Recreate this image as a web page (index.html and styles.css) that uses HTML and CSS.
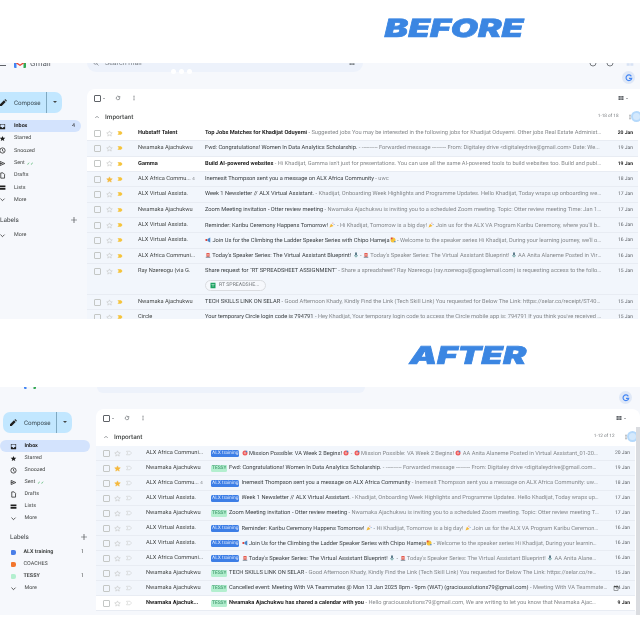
FILE: index.html
```html
<!DOCTYPE html>
<html lang="en">
<head>
    <meta charset="UTF-8">
    <title>Gmail inbox - before and after</title>
    <link rel="stylesheet" href="styles.css">
</head>
<body>
    <svg class="sprites" width="0" height="0">
        <symbol id="star" viewBox="0 0 24 24"><path d="M12 3l2.7 6.2 6.8.6-5.1 4.5 1.5 6.6L12 17.4l-5.9 3.5 1.5-6.6-5.1-4.5 6.8-.6z"/></symbol>
        <symbol id="imp" viewBox="0 0 24 24"><path d="M2 5h14l6 7-6 7H2l5-7z"/></symbol>
        <symbol id="logo" viewBox="0 0 24 18"><path fill="#4285f4" d="M0 4h5v14H2a2 2 0 0 1-2-2z"/><path fill="#34a853" d="M19 4h5v12a2 2 0 0 1-2 2h-3z"/><path fill="#ea4335" d="M0 3l12 8 12-8v3l-12 8L0 6z"/><path fill="#fbbc04" d="M19 2l3-1.5a1.5 1.5 0 0 1 2 1.5v3l-5 3.5z"/></symbol>
        <symbol id="pencil" viewBox="0 0 24 24"><path d="M3 21v-5L15 4l5 5L8 21zM16.5 2.500l5 5 1-1a2 2 0 0 0 0-3l-2-2a2 2 0 0 0-3 0z"/></symbol>
        <symbol id="inbox" viewBox="0 0 24 24"><path d="M3 3h18v18H3zM5 5v9h4a3 3 0 0 0 6 0h4V5z"/></symbol>
        <symbol id="clock" viewBox="0 0 24 24"><path fill="none" stroke="currentColor" stroke-width="2.5" d="M12 3a9 9 0 1 0 0 18 9 9 0 0 0 0-18zM12 7v6l4 2"/></symbol>
        <symbol id="send" viewBox="0 0 24 24"><path fill="none" stroke="currentColor" stroke-width="2.5" d="M4 5l16 7-16 7zM4 12h8"/></symbol>
        <symbol id="file" viewBox="0 0 24 24"><path fill="none" stroke="currentColor" stroke-width="2.5" d="M6 3h8l5 5v13H6z"/></symbol>
        <symbol id="lists" viewBox="0 0 24 24"><path d="M2 5h20v6H2zM2 14h20v6H2z"/></symbol>
        <symbol id="down" viewBox="0 0 24 24"><path fill="none" stroke="currentColor" stroke-width="2.5" d="M5 9l7 7 7-7"/></symbol>
        <symbol id="up" viewBox="0 0 24 24"><path fill="none" stroke="currentColor" stroke-width="2.5" d="M5 16l7-7 7 7"/></symbol>
        <symbol id="refresh" viewBox="0 0 24 24"><path fill="none" stroke="currentColor" stroke-width="2.5" d="M19 12a7 7 0 1 1-2-5l2 2M19 4v5h-5"/></symbol>
        <symbol id="dots" viewBox="0 0 24 24"><path d="M10 3h4v4h-4zM10 10h4v4h-4zM10 17h4v4h-4z"/></symbol>
        <symbol id="plus" viewBox="0 0 24 24"><path d="M11 3h2v8h8v2h-8v8h-2v-8H3v-2h8z"/></symbol>
        <symbol id="density" viewBox="0 0 24 24"><path d="M2 4h9v7H2zM13 4h9v7h-9zM2 13h9v7H2zM13 13h9v7h-9z"/></symbol>
        <symbol id="search" viewBox="0 0 24 24"><path fill="none" stroke="currentColor" stroke-width="3" d="M10 3a7 7 0 1 0 0 14 7 7 0 0 0 0-14zM15 15l7 7"/></symbol>
        <symbol id="ring" viewBox="0 0 24 24"><path fill="none" stroke="currentColor" stroke-width="2.5" d="M12 3a9 9 0 1 0 0 18 9 9 0 0 0 0-18z"/></symbol>
        <symbol id="gee" viewBox="0 0 24 24"><path fill="none" stroke="#4285f4" stroke-width="3.5" d="M19 7a8.500 8.500 0 1 0 1 6h-8"/></symbol>
        <symbol id="cal" viewBox="0 0 24 24"><path d="M3 4h3V2h2v2h8V2h2v2h3v18H3zM5 9v11h14V9z"/></symbol>
        <symbol id="sheet" viewBox="0 0 24 24"><path fill="#1ea362" d="M2 1h20v22H2z"/><path fill="#fff" d="M6 8h12v2h-5v7h-2v-7H6z"/></symbol>
        <symbol id="horn" viewBox="0 0 24 24"><path fill="#e0433a" d="M2 8h7v8H2z"/><path fill="#4a87c9" d="M10 8l11-6v20l-11-6z"/></symbol>
        <symbol id="siren" viewBox="0 0 24 24"><path fill="#e0433a" d="M6 4h12v15H6z"/><path fill="#f6b9a8" d="M9 7h6v8H9z"/><path fill="#7b8794" d="M3 19h18v4H3z"/></symbol>
        <symbol id="party" viewBox="0 0 24 24"><path fill="#f2b632" d="M2 22l6-15 10 9z"/><path fill="#e0433a" d="M14 3h3v3h-3z"/><path fill="#4a87c9" d="M19 8h3v3h-3z"/></symbol>
        <symbol id="mic" viewBox="0 0 24 24"><path fill="#5e7d8c" d="M8 2h8v12H8z"/><path fill="#3f8f86" d="M5 12h2a5 5 0 0 0 10 0h2a7 7 0 0 1-6 7v3h-2v-3a7 7 0 0 1-6-7z"/></symbol>
        <symbol id="face" viewBox="0 0 24 24"><circle cx="12" cy="12" r="10" fill="#f4c33c"/><path fill="#e0433a" d="M3 2h7v7H3z"/><path fill="#4a87c9" d="M17 16h5v5h-5z"/></symbol>
        <symbol id="target" viewBox="0 0 24 24"><circle cx="12" cy="12" r="10" fill="#ee5a5a"/><circle cx="12" cy="12" r="5" fill="#f59a9a"/><path fill="#4a87c9" d="M15 3h6v6h-6z"/></symbol>
    </svg>

    <div class="title"><h2 class="big big-before">BEFORE</h2></div>

    <section class="shot shot-before">
        <div class="topbar">
            <div class="brand"><span class="burger"></span><svg class="logo"><use href="#logo"/></svg><span class="brand-name">Gmail</span></div>
            <div class="search">
                <svg class="ic"><use href="#search"/></svg><span class="search-text">Search mail</span>
                <span class="loading"><i></i><i></i><i></i></span>
                <svg class="ic filter"><use href="#density"/></svg>
            </div>
            <div class="top-right">
                <div class="top-icons">
                    <svg class="ic-big"><use href="#ring"/></svg>
                    <svg class="ic-big"><use href="#ring"/></svg>
                    <svg class="ic-big faint"><use href="#density"/></svg>
                </div>
                <span class="gee"><svg><use href="#gee"/></svg></span>
            </div>
        </div>
        <div class="layout">
            <aside class="sidebar">
                <div class="compose"><svg class="ic-big"><use href="#pencil"/></svg><span class="compose-text">Compose</span><span class="compose-arrow"></span></div>
                <ul class="nav">
                    <li class="active"><svg class="ic-nav"><use href="#inbox"/></svg><b>Inbox</b><em>4</em></li>
                    <li><svg class="ic-nav"><use href="#star"/></svg>Starred</li>
                    <li><svg class="ic-nav"><use href="#clock"/></svg>Snoozed</li>
                    <li><svg class="ic-nav"><use href="#send"/></svg>Sent <span class="tick">✓✓</span></li>
                    <li><svg class="ic-nav"><use href="#file"/></svg>Drafts</li>
                    <li><svg class="ic-nav"><use href="#lists"/></svg>Lists</li>
                    <li><svg class="ic-nav"><use href="#down"/></svg>More</li>
                </ul>
                <div class="labels-head"><span>Labels</span><svg class="ic-big"><use href="#plus"/></svg></div>
                <ul class="nav">
                    <li><svg class="ic-nav"><use href="#down"/></svg>More</li>
                </ul>
            </aside>
            <main class="card">
                <div class="toolbar">
                    <span class="check check-top"></span><span class="caret"></span>
                    <svg class="ic tool"><use href="#refresh"/></svg>
                    <svg class="ic tool"><use href="#dots"/></svg>
                    <span class="density"><svg class="ic"><use href="#density"/></svg><span class="caret"></span></span>
                </div>
                <div class="section">
                    <svg class="ic"><use href="#up"/></svg><span class="section-name">Important</span>
                    <span class="pages">1-18 of 18</span>
                    <svg class="ic"><use href="#dots"/></svg>
                    <span class="pulse"></span>
                </div>

                <div class="row unread"><span class="check"></span><svg class="star"><use href="#star"/></svg><svg class="imp"><use href="#imp"/></svg><span class="sender">Hubstaff Talent</span><span class="text"><b>Top Jobs Matches for Khadijat Oduyemi</b> - Suggested jobs You may be interested in the following jobs for Khadijat Oduyemi. Other jobs Real Estate Administrati...</span><span class="date">20 Jan</span></div>
                <div class="row"><span class="check"></span><svg class="star"><use href="#star"/></svg><svg class="imp"><use href="#imp"/></svg><span class="sender">Nwamaka Ajachukwu</span><span class="text"><b>Fwd: Congratulations! Women In Data Analytics Scholarship.</b> - ---------- Forwarded message --------- From: Digitaley drive &lt;digitaleydrive@gmail.com&gt; Date: We...</span><span class="date">19 Jan</span></div>
                <div class="row unread"><span class="check"></span><svg class="star"><use href="#star"/></svg><svg class="imp"><use href="#imp"/></svg><span class="sender">Gamma</span><span class="text"><b>Build AI-powered websites</b> - Hi Khadijat, Gamma isn't just for presentations. You can use all the same AI-powered tools to build websites too. Build and publish y...</span><span class="date">19 Jan</span></div>
                <div class="row"><span class="check"></span><svg class="star on"><use href="#star"/></svg><svg class="imp"><use href="#imp"/></svg><span class="sender">ALX Africa Commu... <small>4</small></span><span class="text"><b>Inemesit Thompson sent you a message on ALX Africa Community</b> - uwc</span><span class="date">18 Jan</span></div>
                <div class="row"><span class="check"></span><svg class="star"><use href="#star"/></svg><svg class="imp"><use href="#imp"/></svg><span class="sender">ALX Virtual Assista.</span><span class="text"><b>Week 1 Newsletter // ALX Virtual Assistant.</b> - Khadijat, Onboarding Week Highlights and Programme Updates. Hello Khadijat, Today wraps up onboarding week, and ...</span><span class="date">17 Jan</span></div>
                <div class="row"><span class="check"></span><svg class="star"><use href="#star"/></svg><svg class="imp"><use href="#imp"/></svg><span class="sender">Nwamaka Ajachukwu</span><span class="text"><b>Zoom Meeting invitation - Otter review meeting</b> - Nwamaka Ajachukwu is inviting you to a scheduled Zoom meeting. Topic: Otter review meeting Time: Jan 17, 2025 ...</span><span class="date">17 Jan</span></div>
                <div class="row"><span class="check"></span><svg class="star"><use href="#star"/></svg><svg class="imp"><use href="#imp"/></svg><span class="sender">ALX Virtual Assista.</span><span class="text"><b>Reminder: Karibu Ceremony Happens Tomorrow! <svg class="emo"><use href="#party"/></svg></b> - Hi Khadijat, Tomorrow is a big day! <svg class="emo"><use href="#party"/></svg> Join us for the ALX VA Program Karibu Ceremony, where you'll be offici...</span><span class="date">16 Jan</span></div>
                <div class="row"><span class="check"></span><svg class="star"><use href="#star"/></svg><svg class="imp"><use href="#imp"/></svg><span class="sender">ALX Virtual Assista.</span><span class="text"><svg class="emo"><use href="#horn"/></svg> <b>Join Us for the Climbing the Ladder Speaker Series with Chipo Hameja<svg class="emo"><use href="#face"/></svg></b> - Welcome to the speaker series Hi Khadijat, During your learning journey, we'll occas...</span><span class="date">16 Jan</span></div>
                <div class="row"><span class="check"></span><svg class="star"><use href="#star"/></svg><svg class="imp"><use href="#imp"/></svg><span class="sender">ALX Africa Communi...</span><span class="text"><svg class="emo"><use href="#siren"/></svg> <b>Today's Speaker Series: The Virtual Assistant Blueprint! <svg class="emo"><use href="#mic"/></svg></b> - <svg class="emo"><use href="#siren"/></svg> Today's Speaker Series: The Virtual Assistant Blueprint! <svg class="emo"><use href="#mic"/></svg> AA Anita Alaneme Posted in Virtual A...</span><span class="date">16 Jan</span></div>
                <div class="row row-chip"><span class="check"></span><svg class="star"><use href="#star"/></svg><svg class="imp"><use href="#imp"/></svg><span class="sender">Ray Nzereogu (via G.</span><div class="text-wrap"><span class="text"><b>Share request for "RT SPREADSHEET ASSIGNMENT"</b> - Share a spreadsheet? Ray Nzereogu (ray.nzereogu@googlemail.com) is requesting access to the following sp...</span><span class="chip"><svg class="chip-icon"><use href="#sheet"/></svg>RT SPREADSHE...</span></div><span class="date">15 Jan</span></div>
                <div class="row"><span class="check"></span><svg class="star"><use href="#star"/></svg><svg class="imp"><use href="#imp"/></svg><span class="sender">Nwamaka Ajachukwu</span><span class="text"><b>TECH SKILLS LINK ON SELAR</b> - Good Afternoon Khady, Kindly Find the Link (Tech Skill Link) You requested for Below The Link: https://selar.co/receipt/ST401HZ1O7p...</span><span class="date">15 Jan</span></div>
                <div class="row"><span class="check"></span><svg class="star"><use href="#star"/></svg><svg class="imp"><use href="#imp"/></svg><span class="sender">Circle</span><span class="text"><b>Your temporary Circle login code is 794791</b> - Hey Khadijat, Your temporary login code to access the Circle mobile app is: 794791 If you think you've received this em...</span><span class="date">15 Jan</span></div>
            </main>
        </div>
    </section>

    <div class="title title-after"><h2 class="big big-after">AFTER</h2></div>

    <section class="shot shot-after">
        <div class="topbar">
            <div class="brand"><span class="burger"></span><svg class="logo"><use href="#logo"/></svg><span class="brand-name">Gmail</span></div>
            <div class="search"></div>
            <div class="top-right">
                <div class="top-icons">
                    <svg class="ic-big"><use href="#ring"/></svg>
                    <svg class="ic-big"><use href="#ring"/></svg>
                    <svg class="ic-big faint"><use href="#density"/></svg>
                </div>
                <span class="gee"><svg><use href="#gee"/></svg></span>
            </div>
        </div>
        <div class="layout">
            <aside class="sidebar">
                <div class="compose"><svg class="ic-big"><use href="#pencil"/></svg><span class="compose-text">Compose</span><span class="compose-arrow"></span></div>
                <ul class="nav">
                    <li class="active"><svg class="ic-nav"><use href="#inbox"/></svg><b>Inbox</b></li>
                    <li><svg class="ic-nav"><use href="#star"/></svg>Starred</li>
                    <li><svg class="ic-nav"><use href="#clock"/></svg>Snoozed</li>
                    <li><svg class="ic-nav"><use href="#send"/></svg>Sent <span class="tick">✓✓</span></li>
                    <li><svg class="ic-nav"><use href="#file"/></svg>Drafts</li>
                    <li><svg class="ic-nav"><use href="#lists"/></svg>Lists</li>
                    <li><svg class="ic-nav"><use href="#down"/></svg>More</li>
                </ul>
                <div class="labels-head"><span>Labels</span><svg class="ic-big"><use href="#plus"/></svg></div>
                <ul class="nav">
                    <li><span class="swatch swatch-blue"></span><b>ALX training</b><em>1</em></li>
                    <li><span class="swatch swatch-orange"></span>COACHES</li>
                    <li><span class="swatch swatch-green"></span><b>TESSY</b><em>1</em></li>
                    <li><svg class="ic-nav"><use href="#down"/></svg>More</li>
                </ul>
            </aside>
            <main class="card">
                <div class="toolbar">
                    <span class="check check-top"></span><span class="caret"></span>
                    <svg class="ic tool"><use href="#refresh"/></svg>
                    <svg class="ic tool"><use href="#dots"/></svg>
                    <span class="density"><svg class="ic"><use href="#density"/></svg><span class="caret"></span></span>
                </div>
                <div class="section">
                    <svg class="ic"><use href="#up"/></svg><span class="section-name">Important</span>
                    <span class="pages">1-12 of 12</span>
                    <svg class="ic"><use href="#dots"/></svg>
                    <span class="pulse"></span>
                </div>

                <div class="row"><span class="check"></span><svg class="star"><use href="#star"/></svg><svg class="imp off"><use href="#imp"/></svg><span class="sender">ALX Africa Communi...</span><span class="tag tag-alx">ALX training</span><span class="text"><svg class="emo"><use href="#target"/></svg> <b>Mission Possible: VA Week 2 Begins! <svg class="emo"><use href="#target"/></svg></b> - <svg class="emo"><use href="#target"/></svg> Mission Possible: VA Week 2 Begins! <svg class="emo"><use href="#target"/></svg> AA Anita Alaneme Posted in Virtual Assistant_01-2025_Resour...</span><span class="date">20 Jan</span></div>
                <div class="row"><span class="check"></span><svg class="star on"><use href="#star"/></svg><svg class="imp off"><use href="#imp"/></svg><span class="sender">Nwamaka Ajachukwu</span><span class="tag tag-tessy">TESSY</span><span class="text"><b>Fwd: Congratulations! Women In Data Analytics Scholarship.</b> - ---------- Forwarded message --------- From: Digitaley drive &lt;digitaleydrive@gmail.com&gt; D...</span><span class="date">19 Jan</span></div>
                <div class="row"><span class="check"></span><svg class="star on"><use href="#star"/></svg><svg class="imp off"><use href="#imp"/></svg><span class="sender">ALX Africa Commu... <small>4</small></span><span class="tag tag-alx">ALX training</span><span class="text"><b>Inemesit Thompson sent you a message on ALX Africa Community</b> - Inemesit Thompson sent you a message on ALX Africa Community: uwc View mes...</span><span class="date">18 Jan</span></div>
                <div class="row"><span class="check"></span><svg class="star"><use href="#star"/></svg><svg class="imp off"><use href="#imp"/></svg><span class="sender">ALX Virtual Assista.</span><span class="tag tag-alx">ALX training</span><span class="text"><b>Week 1 Newsletter // ALX Virtual Assistant.</b> - Khadijat, Onboarding Week Highlights and Programme Updates. Hello Khadijat, Today wraps up onboardin...</span><span class="date">17 Jan</span></div>
                <div class="row"><span class="check"></span><svg class="star"><use href="#star"/></svg><svg class="imp off"><use href="#imp"/></svg><span class="sender">Nwamaka Ajachukwu</span><span class="tag tag-tessy">TESSY</span><span class="text"><b>Zoom Meeting invitation - Otter review meeting</b> - Nwamaka Ajachukwu is inviting you to a scheduled Zoom meeting. Topic: Otter review meeting Time: Jan 1...</span><span class="date">17 Jan</span></div>
                <div class="row"><span class="check"></span><svg class="star"><use href="#star"/></svg><svg class="imp off"><use href="#imp"/></svg><span class="sender">ALX Virtual Assista.</span><span class="tag tag-alx">ALX training</span><span class="text"><b>Reminder: Karibu Ceremony Happens Tomorrow! <svg class="emo"><use href="#party"/></svg></b> - Hi Khadijat, Tomorrow is a big day! <svg class="emo"><use href="#party"/></svg> Join us for the ALX VA Program Karibu Ceremony, where y...</span><span class="date">16 Jan</span></div>
                <div class="row"><span class="check"></span><svg class="star"><use href="#star"/></svg><svg class="imp off"><use href="#imp"/></svg><span class="sender">ALX Virtual Assista.</span><span class="tag tag-alx">ALX training</span><span class="text"><svg class="emo"><use href="#horn"/></svg> <b>Join Us for the Climbing the Ladder Speaker Series with Chipo Hameja<svg class="emo"><use href="#face"/></svg></b> - Welcome to the speaker series Hi Khadijat, During your learning journe...</span><span class="date">16 Jan</span></div>
                <div class="row"><span class="check"></span><svg class="star"><use href="#star"/></svg><svg class="imp off"><use href="#imp"/></svg><span class="sender">ALX Africa Communi...</span><span class="tag tag-alx">ALX training</span><span class="text"><svg class="emo"><use href="#siren"/></svg> <b>Today's Speaker Series: The Virtual Assistant Blueprint! <svg class="emo"><use href="#mic"/></svg></b> - <svg class="emo"><use href="#siren"/></svg> Today's Speaker Series: The Virtual Assistant Blueprint! <svg class="emo"><use href="#mic"/></svg> AA Anita Alaneme Poste...</span><span class="date">16 Jan</span></div>
                <div class="row"><span class="check"></span><svg class="star"><use href="#star"/></svg><svg class="imp off"><use href="#imp"/></svg><span class="sender">Nwamaka Ajachukwu</span><span class="tag tag-tessy">TESSY</span><span class="text"><b>TECH SKILLS LINK ON SELAR</b> - Good Afternoon Khady, Kindly Find the Link (Tech Skill Link) You requested for Below The Link: https://selar.co/receipt/ST401...</span><span class="date">15 Jan</span></div>
                <div class="row"><span class="check"></span><svg class="star"><use href="#star"/></svg><svg class="imp off"><use href="#imp"/></svg><span class="sender">Nwamaka Ajachukwu</span><span class="tag tag-tessy">TESSY</span><span class="text text-cal"><b>Cancelled event: Meeting With VA Teammates @ Mon 13 Jan 2025 8pm - 9pm (WAT) (graciousolutions79@gmail.com)</b> - Meeting With VA Teammates This ...</span><svg class="cal"><use href="#cal"/></svg><span class="date">14 Jan</span></div>
                <div class="row unread"><span class="check"></span><svg class="star"><use href="#star"/></svg><svg class="imp off"><use href="#imp"/></svg><span class="sender">Nwamaka Ajachuk...</span><span class="tag tag-tessy">TESSY</span><span class="text"><b>Nwamaka Ajachukwu has shared a calendar with you</b> - Hello graciousolutions79@gmail.com, We are writing to let you know that Nwamaka Ajachukwu ...</span><span class="date">9 Jan</span></div>
            </main>
            <span class="scrollbar"></span>
        </div>
    </section>
</body>
</html>
```

FILE: styles.css
```css
html, body {
    margin: 0;
    padding: 0;
    width: 640px;
    height: 640px;
    overflow: hidden;
    background-color: #ffffff;
}
body {
    font-family: Roboto, sans-serif;
    font-size: 5.7px;
    color: #444746;
    text-rendering: geometricPrecision;
}
ul {
    list-style-type: none;
    margin: 0;
    padding: 0;
}
.sprites {
    position: absolute;
}
svg {
    fill: currentColor;
    flex: none;
}

/* headings */
.title {
    height: 63px;
    display: flex;
    justify-content: flex-end;
    align-items: flex-start;
    padding-right: 114px;
}
.title-after {
    height: 68px;
}
.big {
    margin: 0;
    font-family: Inter, sans-serif;
    line-height: 26px;
    font-weight: 900;
    font-style: italic;
    color: #3b86e2;
    transform-origin: right center;
    -webkit-text-stroke: 0.6px #3b86e2;
    filter: blur(0.3px);
}
.big-before {
    margin: 16px 2px 0 0;
    font-size: 25px;
    transform: scaleX(1.41);
}
.big-after {
    margin-top: 23px;
    font-size: 24.5px;
    transform: scaleX(1.42);
}

/* screenshots */
.shot {
    background-color: #f6f8fc;
    overflow: hidden;
    filter: blur(0.5px);
}
.shot-before {
    height: 256px;
}
.shot-after {
    height: 228px;
}
.topbar {
    display: flex;
    align-items: flex-start;
    height: 26px;
}
.shot-after .topbar {
    height: 22px;
}
.brand {
    width: 87px;
    height: 10px;
    margin-top: -5px;
    display: flex;
    align-items: center;
    font-size: 8px;
    color: #5f6368;
    flex: none;
}
.shot-after .brand {
    width: 97px;
    margin-top: -8px;
    padding-left: 10px;
    box-sizing: border-box;
}
.burger {
    width: 6px;
    height: 4px;
    margin-right: 8px;
    border-top: 1px solid #5f6368;
    border-bottom: 1px solid #5f6368;
}
.logo {
    width: 12px;
    height: 9px;
    margin-right: 4px;
}
.search {
    width: 276px;
    height: 18px;
    margin-top: -9px;
    padding: 0 8px 0 6px;
    box-sizing: border-box;
    border-radius: 9px;
    background-color: #edf2fb;
    display: flex;
    align-items: center;
    gap: 3px;
    color: #80868b;
    flex: none;
}
.shot-after .search {
    width: 268px;
    height: 12px;
    margin-top: -6px;
    border-radius: 6px;
}
.search-text {
    margin-left: 3px;
    font-size: 7px;
}
.loading {
    display: flex;
    gap: 3px;
    margin: 16px 0 0 26px;
}
.loading i {
    width: 5px;
    height: 5px;
    border-radius: 50%;
    background-color: #ffffff;
}
.filter {
    margin-left: auto;
}
.top-right {
    margin-left: auto;
    width: 60px;
    display: flex;
    flex-direction: column;
    align-items: flex-end;
    padding-right: 6px;
    box-sizing: border-box;
}
.top-icons {
    display: flex;
    gap: 9px;
    height: 6px;
    color: #5f6368;
}
.top-icons svg {
    margin-top: -4px;
}
.top-icons .faint {
    margin-left: 3px;
    color: #d8e2f4;
}
.shot-after .top-icons {
    height: 5px;
    margin: -4px 3px 0 0;
}
.gee {
    width: 13px;
    height: 13px;
    margin: 2px -1px 0 0;
    border-radius: 50%;
    background-color: #dfe8f7;
    display: flex;
    align-items: center;
    justify-content: center;
}
.shot-after .gee {
    margin: 3px 2px 0 0;
}
.gee svg {
    width: 8px;
    height: 8px;
}
.layout {
    display: flex;
    align-items: flex-start;
    height: 100%;
}

/* sidebar */
.sidebar {
    width: 87px;
    flex: none;
    padding-top: 3px;
    font-size: 5.4px;
}
.shot-after .sidebar {
    width: 96px;
}
.compose {
    margin-left: -6px;
    width: 68px;
    height: 21px;
    border-radius: 7px;
    background-color: #c2e7ff;
    display: flex;
    align-items: center;
    color: #1f1f1f;
    box-sizing: border-box;
    padding-left: 5px;
    font-size: 6.2px;
}
.shot-after .compose {
    margin-left: 3px;
    width: 69px;
    padding-left: 6px;
}
.compose-text {
    margin-left: 7px;
    color: #37474f;
}
.compose-arrow {
    margin-left: auto;
    width: 16px;
    height: 100%;
    border-left: 1px solid #7fa8c0;
    box-sizing: border-box;
    position: relative;
}
.compose-arrow::after {
    content: "";
    position: absolute;
    left: 6px;
    top: 9px;
    border: 2px solid transparent;
    border-top-color: #444746;
}
.ic-big {
    width: 8px;
    height: 8px;
}
.ic {
    width: 6px;
    height: 6px;
}
.ic-nav {
    width: 7px;
    height: 7px;
    margin-right: 8px;
    color: #1f1f1f;
    flex: none;
}
.nav {
    width: 81px;
}
.sidebar .nav:first-of-type {
    margin-top: 7px;
}
.nav li {
    height: 12.3px;
    display: flex;
    align-items: center;
    margin-left: -1px;
    padding-right: 6px;
    box-sizing: border-box;
    white-space: nowrap;
}
.shot-after .nav {
    width: 90px;
}
.shot-after .nav li {
    height: 12px;
    margin-left: 0;
    padding-left: 9.5px;
}
.nav li.active {
    background-color: #d3e3fd;
    border-radius: 0 6px 6px 0;
    color: #1f1f1f;
}
.shot-after .nav li.active {
    border-radius: 6px;
}
.nav em {
    margin-left: auto;
    font-style: normal;
}
.tick {
    color: #34a853;
    margin-left: 2px;
    font-size: 4px;
}
.labels-head {
    display: flex;
    align-items: center;
    justify-content: space-between;
    width: 78px;
    height: 14px;
    margin-top: 7px;
    font-size: 6.4px;
    color: #3c4043;
}
.shot-after .labels-head {
    width: 77.5px;
    margin: 6px 0 2px 10px;
}
.shot-before .labels-head + .nav {
    margin-top: 2px;
}
.swatch {
    width: 5px;
    height: 5px;
    margin: 0 8px 0 1px;
    border-radius: 1px 2px 2px 1px;
}
.swatch-blue {
    background-color: #4a7fe8;
}
.swatch-orange {
    background-color: #f2762e;
}
.swatch-green {
    background-color: #b3efcf;
}

/* message list */
.card {
    flex: 1;
    min-width: 0;
    background-color: #ffffff;
    border-radius: 8px 0 0 0;
}
.shot-after .card {
    border-radius: 8px 8px 0 0;
}
.toolbar {
    height: 18px;
    padding: 0 12px 0 7px;
    display: flex;
    align-items: center;
    color: #5f6368;
}
.shot-after .toolbar {
    padding-right: 14px;
}
.check {
    width: 5px;
    height: 5px;
    border: 1px solid #c4c7c5;
    border-radius: 1px;
    flex: none;
}
.check-top {
    border-color: #5f6368;
}
.caret {
    margin: 2px 0 0 2px;
    border: 1.5px solid transparent;
    border-top-color: #5f6368;
}
.tool {
    margin-left: 10px;
}
.density {
    margin-left: auto;
    display: flex;
    align-items: center;
}
.section {
    height: 19px;
    padding-left: 7px;
    display: flex;
    align-items: center;
    color: #5f6368;
    overflow: hidden;
}
.section-name {
    margin-left: 5px;
    font-size: 6.4px;
    font-weight: 500;
    color: #444746;
}
.pages {
    margin-left: auto;
    margin-right: 8px;
    font-size: 4.6px;
    color: #777b7e;
}
.pulse {
    width: 11px;
    height: 11px;
    margin: 0 -2px 0 -1.5px;
    border-radius: 50%;
    border: 2px solid #b5d9fb;
    background-color: #d4e9fd;
    box-sizing: border-box;
    flex: none;
}
.shot-after .pulse {
    margin-right: 2px;
}
.row {
    height: 15.33px;
    box-sizing: border-box;
    margin-right: 2px;
    padding: 0 5px 0 7px;
    display: flex;
    align-items: center;
    background-color: #f2f6fc;
    border-bottom: 1px solid #e8ecf3;
    white-space: nowrap;
    color: #444746;
}
.shot-after .row {
    height: 15px;
    margin-right: 5px;
}
.row.unread {
    background-color: #ffffff;
}
.row.unread .sender, .row.unread .date {
    font-weight: 700;
    color: #1f1f1f;
}
.star {
    width: 7px;
    height: 7px;
    margin-left: 5px;
    fill: none;
    stroke: #c4c7c5;
    stroke-width: 2;
}
.shot-after .star {
    margin-left: 4px;
}
.star.on {
    fill: #f5b83d;
    stroke: #f5b83d;
}
.imp {
    width: 6px;
    height: 6px;
    margin-left: 4px;
    fill: #f5c33b;
}
.imp.off {
    fill: none;
    stroke: #c4c7c5;
    stroke-width: 2;
    margin-left: 4.5px;
}
.sender {
    width: 67px;
    margin-left: 15px;
    flex: none;
    overflow: hidden;
}
.shot-after .sender {
    width: 65px;
    margin-left: 14.5px;
}
.sender small {
    font-size: 4.4px;
    color: #777b7e;
}
.text {
    flex: 1;
    min-width: 0;
    overflow: hidden;
    text-overflow: ellipsis;
    color: #85888b;
    margin-right: 15px;
}
.text-cal {
    margin-right: 4px;
}
.text b {
    font-weight: 400;
    color: #3c4043;
}
.unread .text b {
    font-weight: 700;
    color: #1f1f1f;
}
.date {
    width: 16px;
    flex: none;
    text-align: right;
    font-size: 5px;
    color: #5f6368;
}
.emo {
    width: 6px;
    height: 6px;
    vertical-align: -1px;
}
.cal {
    width: 6px;
    height: 6px;
    margin-right: -5px;
    color: #444746;
}
.row-chip {
    height: 31px;
    align-items: flex-start;
    padding-top: 4px;
}
.row-chip .date, .row-chip .sender {
    line-height: 7px;
}
.text-wrap {
    flex: 1;
    min-width: 0;
    display: flex;
    flex-direction: column;
    align-items: flex-start;
}
.text-wrap .text {
    flex: none;
    width: calc(100% - 15px);
    line-height: 7px;
}
.chip {
    margin-top: 5px;
    height: 11px;
    width: 61px;
    box-sizing: border-box;
    border: 1px solid #dadce0;
    border-radius: 6px;
    background-color: #f6f8fc;
    display: flex;
    align-items: center;
    padding-left: 4px;
    color: #777b7e;
    font-size: 5.2px;
}
.chip-icon {
    width: 6px;
    height: 7px;
    margin-right: 3px;
}
.tag {
    margin-right: 2.5px;
    padding: 0 1px;
    height: 7px;
    line-height: 7px;
    border-radius: 1.5px;
    font-size: 4.9px;
    flex: none;
}
.tag-alx {
    background-color: #3d7ee6;
    color: #dbe7fb;
    width: 26px;
    text-align: center;
}
.tag-tessy {
    background-color: #b3efcf;
    color: #2f8a5f;
    width: 13.5px;
    text-align: center;
}
.scrollbar {
    width: 4px;
    height: 190px;
    margin-top: 18px;
    background-color: #dadce0;
    flex: none;
    margin-left: -4px;
}
```
